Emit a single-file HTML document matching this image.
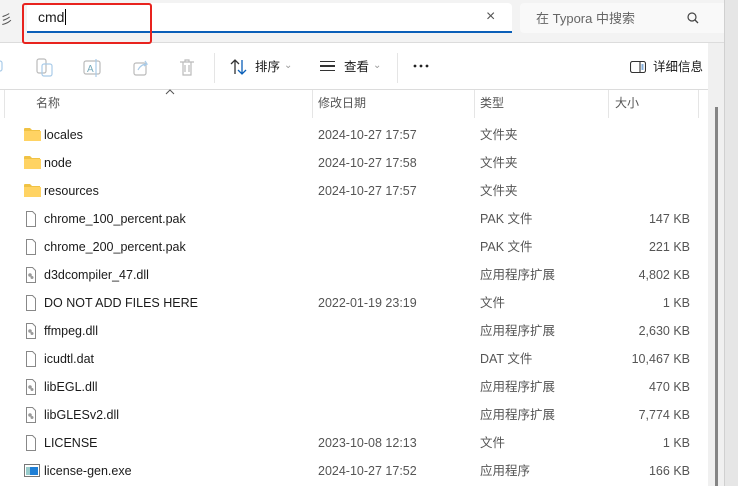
<!DOCTYPE html>
<html><head><meta charset="utf-8"><style>
*{margin:0;padding:0;box-sizing:border-box}
body{width:738px;height:486px;overflow:hidden;background:#fff;font-family:"Liberation Sans","Noto Sans CJK SC",sans-serif;font-size:12.5px;line-height:15px;color:#1a1a1a;position:relative}
.abs{position:absolute;line-height:15px}
.top{left:0;top:0;width:738px;height:43px;background:#f3f3f3;border-bottom:1px solid #dcdcdc}
.addr{left:27px;top:3px;width:485px;height:30px;background:#fff;border-radius:4px 4px 0 0;border-bottom:2px solid #0a5fb8}
.red{left:22px;top:3px;width:130px;height:41px;border:2px solid #e8231e;border-radius:3px}
.search{left:520px;top:3px;width:208px;height:30px;background:#f9f9f9;border-radius:4px}
.hdr{top:89px;height:30px;border-top:1px solid #dcdcdc}
.row{position:absolute;left:0;height:28px;width:708px;font-size:12.5px}
.row span{position:absolute;top:7px;white-space:nowrap;line-height:15px;height:15px}
.n{left:44px;color:#1a1a1a}.d{left:318px;color:#555}.t{left:480px;color:#555}.s{right:18px;color:#555}
.ic{position:absolute;left:24px;top:6px}
</style></head><body>
<div class="abs top"></div>
<div class="abs" style="left:0;top:12px;font-size:13px;color:#555">彡</div>
<div class="abs addr"></div>
<div class="abs" style="left:38px;top:10px;font-size:14px">cmd<span style="border-left:1px solid #000;margin-left:1px"></span></div>
<div class="abs" style="left:486px;top:9px;font-size:16px;color:#555">×</div>
<div class="abs red"></div>
<div class="abs search"></div>
<div class="abs" style="left:536px;top:11px;font-size:13px;color:#666">在 Typora 中搜索</div>
<svg class="abs" style="left:686px;top:11px" width="14" height="14"><circle cx="6" cy="6" r="4" fill="none" stroke="#444" stroke-width="1.2"/><line x1="9" y1="9" x2="12" y2="12" stroke="#444" stroke-width="1.3"/></svg>
<div class="abs" style="left:708px;top:43px;width:16px;height:443px;background:#f0f0f0"></div>
<div class="abs" style="left:724px;top:0;width:14px;height:486px;background:#e6e6e6;border-left:1px solid #d0d0d0"></div>
<div class="abs" style="left:715px;top:107px;width:3px;height:379px;background:#858585"></div>
<svg class="abs" style="left:0;top:50px" width="220" height="34" fill="none" stroke="#a9cbe8" stroke-width="1.2">
<rect x="-4" y="11" width="6" height="10" rx="2"/>
<rect x="37" y="9" width="9" height="14" rx="2" stroke="#bbb"/><rect x="42" y="14" width="10" height="12" rx="2"/>
<rect x="84" y="11" width="16" height="13" rx="2" stroke="#bbb"/><text x="87" y="22" font-size="10" fill="#7ab" stroke="none">A</text><line x1="96" y1="9" x2="96" y2="27"/>
<rect x="134" y="13" width="12" height="12" rx="2" stroke="#bbb"/><path d="M138 20q3-6 9-6l-2-3m2 3-3 2"/>
<path d="M180 12h14M183 12v13h8V12M185 15v7M189 15v7M185 12v-2h4v2" stroke="#bbb"/>
</svg>
<div class="abs" style="left:214px;top:53px;width:1px;height:30px;background:#e5e5e5"></div>
<div class="abs" style="left:397px;top:53px;width:1px;height:30px;background:#e5e5e5"></div>
<svg class="abs" style="left:230px;top:58px" width="18" height="18" fill="none" stroke-width="1.3"><path d="M5 16V2M1 6l4-4 4 4" stroke="#333"/><path d="M12 2v14M8 12l4 4 4-4" stroke="#0a5fb8"/></svg>
<div class="abs" style="left:255px;top:60px;font-size:12.5px">排序</div>
<div class="abs" style="left:284px;top:58px;font-size:10px;color:#999">⌄</div>
<div class="abs" style="left:320px;top:61px;width:15px;height:10px;border-top:1.5px solid #333;border-bottom:1.5px solid #333"></div>
<div class="abs" style="left:320px;top:65px;width:15px;height:1.5px;background:#333"></div>
<div class="abs" style="left:344px;top:60px;font-size:12.5px">查看</div>
<div class="abs" style="left:373px;top:58px;font-size:10px;color:#999">⌄</div>
<svg class="abs" style="left:413px;top:64px" width="16" height="4"><circle cx="2" cy="2" r="1.4" fill="#222"/><circle cx="8" cy="2" r="1.4" fill="#222"/><circle cx="14" cy="2" r="1.4" fill="#222"/></svg>
<svg class="abs" style="left:630px;top:61px" width="16" height="12" fill="none" stroke="#333" stroke-width="1.1"><rect x="0.5" y="0.5" width="15" height="11" rx="2"/><line x1="10" y1="0.5" x2="10" y2="11.5"/><path d="M11.5 4h2M11.5 6h2M11.5 8h2" stroke="#0a5fb8"/></svg>
<div class="abs" style="left:653px;top:60px;font-size:12.5px">详细信息</div>
<div class="abs hdr" style="left:0;width:708px"></div>
<div class="abs" style="left:4px;top:90px;width:1px;height:28px;background:#e5e5e5"></div>
<div class="abs" style="left:312px;top:90px;width:1px;height:28px;background:#e5e5e5"></div>
<div class="abs" style="left:474px;top:90px;width:1px;height:28px;background:#e5e5e5"></div>
<div class="abs" style="left:608px;top:90px;width:1px;height:28px;background:#e5e5e5"></div>
<div class="abs" style="left:698px;top:90px;width:1px;height:28px;background:#e5e5e5"></div>
<svg class="abs" style="left:165px;top:89px" width="10" height="6" fill="none" stroke="#555"><path d="M1 5l4-4 4 4"/></svg>
<div class="abs" style="left:36px;top:96px;font-size:12px;color:#555">名称</div>
<div class="abs" style="left:318px;top:96px;font-size:12px;color:#555">修改日期</div>
<div class="abs" style="left:480px;top:96px;font-size:12px;color:#555">类型</div>
<div class="abs" style="left:615px;top:96px;font-size:12px;color:#555">大小</div>
<div class="row" style="top:121px"><svg class="ic" width="17" height="14"><path d="M0 2q0-1 1-1h5l2 2h8v10H0z" fill="#f0c244"/><rect x="0" y="4" width="17" height="10" fill="#ffd363"/></svg><span class="n">locales</span><span class="d">2024-10-27 17:57</span><span class="t">文件夹</span></div>
<div class="row" style="top:149px"><svg class="ic" width="17" height="14"><path d="M0 2q0-1 1-1h5l2 2h8v10H0z" fill="#f0c244"/><rect x="0" y="4" width="17" height="10" fill="#ffd363"/></svg><span class="n">node</span><span class="d">2024-10-27 17:58</span><span class="t">文件夹</span></div>
<div class="row" style="top:177px"><svg class="ic" width="17" height="14"><path d="M0 2q0-1 1-1h5l2 2h8v10H0z" fill="#f0c244"/><rect x="0" y="4" width="17" height="10" fill="#ffd363"/></svg><span class="n">resources</span><span class="d">2024-10-27 17:57</span><span class="t">文件夹</span></div>
<div class="row" style="top:205px"><svg class="ic" width="14" height="16"><path d="M2.5 .5h6l3 3v12h-9z" fill="#fff" stroke="#888"/></svg><span class="n">chrome_100_percent.pak</span><span class="t">PAK 文件</span><span class="s">147 KB</span></div>
<div class="row" style="top:233px"><svg class="ic" width="14" height="16"><path d="M2.5 .5h6l3 3v12h-9z" fill="#fff" stroke="#888"/></svg><span class="n">chrome_200_percent.pak</span><span class="t">PAK 文件</span><span class="s">221 KB</span></div>
<div class="row" style="top:261px"><svg class="ic" width="14" height="16"><path d="M2.5 .5h6l3 3v12h-9z" fill="#fff" stroke="#888"/><circle cx="6" cy="8" r="1.8" fill="#999"/><circle cx="8" cy="10.5" r="1.5" fill="#999"/></svg><span class="n">d3dcompiler_47.dll</span><span class="t">应用程序扩展</span><span class="s">4,802 KB</span></div>
<div class="row" style="top:289px"><svg class="ic" width="14" height="16"><path d="M2.5 .5h6l3 3v12h-9z" fill="#fff" stroke="#888"/></svg><span class="n">DO NOT ADD FILES HERE</span><span class="d">2022-01-19 23:19</span><span class="t">文件</span><span class="s">1 KB</span></div>
<div class="row" style="top:317px"><svg class="ic" width="14" height="16"><path d="M2.5 .5h6l3 3v12h-9z" fill="#fff" stroke="#888"/><circle cx="6" cy="8" r="1.8" fill="#999"/><circle cx="8" cy="10.5" r="1.5" fill="#999"/></svg><span class="n">ffmpeg.dll</span><span class="t">应用程序扩展</span><span class="s">2,630 KB</span></div>
<div class="row" style="top:345px"><svg class="ic" width="14" height="16"><path d="M2.5 .5h6l3 3v12h-9z" fill="#fff" stroke="#888"/></svg><span class="n">icudtl.dat</span><span class="t">DAT 文件</span><span class="s">10,467 KB</span></div>
<div class="row" style="top:373px"><svg class="ic" width="14" height="16"><path d="M2.5 .5h6l3 3v12h-9z" fill="#fff" stroke="#888"/><circle cx="6" cy="8" r="1.8" fill="#999"/><circle cx="8" cy="10.5" r="1.5" fill="#999"/></svg><span class="n">libEGL.dll</span><span class="t">应用程序扩展</span><span class="s">470 KB</span></div>
<div class="row" style="top:401px"><svg class="ic" width="14" height="16"><path d="M2.5 .5h6l3 3v12h-9z" fill="#fff" stroke="#888"/><circle cx="6" cy="8" r="1.8" fill="#999"/><circle cx="8" cy="10.5" r="1.5" fill="#999"/></svg><span class="n">libGLESv2.dll</span><span class="t">应用程序扩展</span><span class="s">7,774 KB</span></div>
<div class="row" style="top:429px"><svg class="ic" width="14" height="16"><path d="M2.5 .5h6l3 3v12h-9z" fill="#fff" stroke="#888"/></svg><span class="n">LICENSE</span><span class="d">2023-10-08 12:13</span><span class="t">文件</span><span class="s">1 KB</span></div>
<div class="row" style="top:457px"><svg class="ic" width="17" height="14"><rect x=".5" y="1.5" width="15" height="12" fill="#fff" stroke="#777"/><rect x="2" y="4" width="12" height="8" fill="#1f7fd6"/><rect x="2" y="4" width="4" height="8" fill="#9cc"/></svg><span class="n">license-gen.exe</span><span class="d">2024-10-27 17:52</span><span class="t">应用程序</span><span class="s">166 KB</span></div>
</body></html>
